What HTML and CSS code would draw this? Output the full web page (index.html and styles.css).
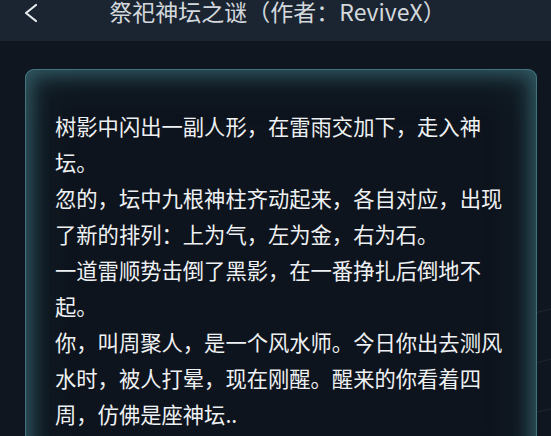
FILE: index.html
```html
<!DOCTYPE html>
<html>
<head>
  <title>祭祀神坛之谜</title>
  <link rel="stylesheet" href="styles.css">
</head>
<body>
  <header class="topbar">
    <a class="back" href="#">
      <svg width="16" height="20" viewBox="0 0 16 20"><path d="M13 2 L3 10 L13 18" fill="none" stroke="#e8ecef" stroke-width="2.2" stroke-linecap="round" stroke-linejoin="round"/></svg>
    </a>
    <h1 class="title">祭祀神坛之谜（作者：ReviveX）</h1>
  </header>
  <main class="stage">
    <svg class="web" width="300" height="260" viewBox="0 0 300 260">
      <g fill="none" stroke="rgba(120,170,180,0.12)" stroke-width="1">
        <path d="M0 200 Q120 60 300 20"/>
        <path d="M40 260 Q140 110 300 70"/>
        <path d="M100 260 Q180 140 300 120"/>
        <path d="M60 90 L180 260"/>
        <path d="M150 40 L260 260"/>
        <path d="M230 10 L300 200"/>
        <path d="M0 150 L300 240"/>
      </g>
    </svg>
    <section class="card">
      <p class="story">树影中闪出一副人形，在雷雨交加下，走入神坛。<br>忽的，坛中九根神柱齐动起来，各自对应，出现了新的排列：上为气，左为金，右为石。<br>一道雷顺势击倒了黑影，在一番挣扎后倒地不起。<br>你，叫周聚人，是一个风水师。今日你出去测风水时，被人打晕，现在刚醒。醒来的你看着四周，仿佛是座神坛..</p>
    </section>
  </main>
</body>
</html>
```

FILE: styles.css
```css
:root {
  --bg-page: #0f1620;
  --bg-bar: #1b2532;
  --card-bg: #0e141d;
  --glow: #3b6b74;
  --text-main: #eef1f3;
  --text-title: #d3d8dc;
}

* {
  margin: 0;
  padding: 0;
  box-sizing: border-box;
}

body {
  font-family: "Noto Sans CJK SC", "Noto Sans", sans-serif;
  background: var(--bg-page);
  color: var(--text-main);
  height: 436px;
  overflow: hidden;
}

.topbar {
  height: 41px;
  background: var(--bg-bar);
  display: flex;
  align-items: flex-start;
  position: relative;
}

.back {
  position: absolute;
  left: 23px;
  top: 3px;
  display: block;
}

.title {
  flex: 1;
  text-align: center;
  font-size: 23px;
  font-weight: 400;
  line-height: 23px;
  margin-top: 0;
  padding-left: 4px;
  color: var(--text-title);
  letter-spacing: 0;
}

.stage {
  position: relative;
  padding: 28px 14px 0 25px;
}

.web {
  position: absolute;
  right: 0;
  bottom: -60px;
}

.card {
  position: relative;
  width: 512px;
  height: 420px;
  border-radius: 9px;
  background: var(--card-bg);
  box-shadow:
    inset 0 0 0 1px rgba(90, 150, 160, 0.55),
    inset 0 0 18px 6px rgba(59, 107, 116, 0.75),
    inset 0 0 40px 10px rgba(40, 80, 90, 0.35);
  padding: 39px 28px 0 30px;
}

.story {
  width: 455px;
  font-size: 21.3px;
  line-height: 36px;
  color: var(--text-main);
  line-break: strict;
}
```
